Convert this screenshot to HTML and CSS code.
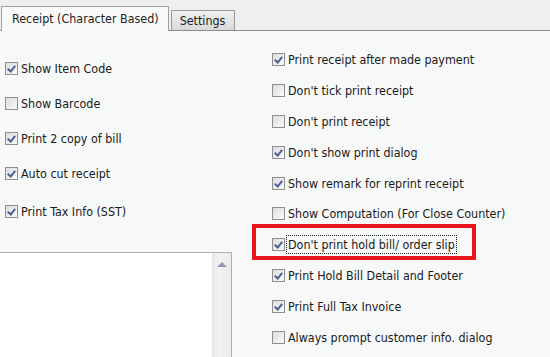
FILE: index.html
```html
<!DOCTYPE html>
<html>
<head>
    <meta charset="UTF-8">
    <title>Receipt Settings</title>
    <link rel="stylesheet" href="styles.css">
</head>
<body>
    <div id="tabBar">
        <div class="tab active">Receipt (Character Based)</div>
        <div class="tab">Settings</div>
    </div>

    <div id="tabPage">
        <div class="column leftColumn">
            <div class="options">
                <div class="option"><span class="box checked"></span><span class="label">Show Item Code</span></div>
                <div class="option"><span class="box"></span><span class="label">Show Barcode</span></div>
                <div class="option"><span class="box checked"></span><span class="label">Print 2 copy of bill</span></div>
                <div class="option"><span class="box checked"></span><span class="label">Auto cut receipt</span></div>
                <div class="option last"><span class="box checked"></span><span class="label">Print Tax Info (SST)</span></div>
            </div>
            <div class="textBox">
                <div class="scrollBar"><span class="arrowUp"></span></div>
            </div>
        </div>

        <div class="column rightColumn">
            <div class="option"><span class="box checked"></span><span class="label">Print receipt after made payment</span></div>
            <div class="option"><span class="box"></span><span class="label">Don't tick print receipt</span></div>
            <div class="option"><span class="box"></span><span class="label">Don't print receipt</span></div>
            <div class="option"><span class="box checked"></span><span class="label">Don't show print dialog</span></div>
            <div class="option"><span class="box checked"></span><span class="label">Show remark for reprint receipt</span></div>
            <div class="option"><span class="box"></span><span class="label">Show Computation (For Close Counter)</span></div>
            <div class="option highlight"><span class="box checked"></span><span class="label focused">Don't print hold bill/ order slip</span></div>
            <div class="option"><span class="box checked"></span><span class="label">Print Hold Bill Detail and Footer</span></div>
            <div class="option"><span class="box checked"></span><span class="label">Print Full Tax Invoice</span></div>
            <div class="option"><span class="box"></span><span class="label">Always prompt customer info. dialog</span></div>
        </div>
    </div>
</body>
</html>
```

FILE: styles.css
```css
body {
    margin: 0;
    width: 550px;
    height: 357px;
    overflow: hidden;
    background-color: #f7f8f8;
    font-family: Tahoma, "DejaVu Sans Condensed", "DejaVu Sans", sans-serif;
    font-size: 12.4px;
    color: #1a1a1a;
}

#tabBar {
    display: flex;
    align-items: flex-end;
    height: 30px;
    padding-left: 1px;
    background-color: #eeeff1;
    border-bottom: 1px solid #8c8c8c;
}

.tab {
    display: flex;
    align-items: center;
    height: 19px;
    padding: 0 9px 0 8px;
    margin-left: 2px;
    border: 1px solid #9a9a9a;
    border-bottom: none;
    background: linear-gradient(#f0f0f0, #d9d9d9);
    color: #222;
}

.tab.active {
    height: 23px;
    margin-left: 0;
    margin-bottom: -1px;
    padding: 0 9px 1px 10px;
    background: #f9f9f9;
    border-color: #a0a0a0;
}

#tabPage {
    display: grid;
    grid-template-columns: 252px 1fr;
    height: 326px;
}

.leftColumn {
    display: flex;
    flex-direction: column;
}

.options {
    padding-top: 20px;
}

.option {
    display: flex;
    align-items: center;
    height: 35px;
    padding-left: 5px;
}

.option.last {
    margin-top: 3px;
}

.rightColumn {
    padding-top: 13px;
}

.rightColumn .option {
    height: 30.9px;
    padding-left: 20px;
    position: relative;
}

.box {
    width: 11px;
    height: 11px;
    border: 1px solid #8f8f8f;
    background: linear-gradient(135deg, #dcdcdc, #fbfbfb);
    margin-right: 3px;
    flex-shrink: 0;
    position: relative;
}

.box.checked::after {
    content: "";
    position: absolute;
    left: 3px;
    top: 1px;
    width: 3px;
    height: 6px;
    border: solid #4b5f99;
    border-width: 0 2px 2px 0;
    transform: rotate(40deg);
}

.label {
    white-space: nowrap;
}

.label.focused {
    outline: 1px dotted #222;
    outline-offset: 1px;
}

.highlight::before {
    content: "";
    position: absolute;
    left: 0;
    top: -5px;
    width: 216px;
    height: 28px;
    border: 4px solid #e8161d;
}

.textBox {
    margin-top: 23px;
    width: 231px;
    flex: 1;
    display: flex;
    justify-content: flex-end;
    background: #ffffff;
    border-top: 1px solid #a9b0ba;
    border-right: 1px solid #a9b0ba;
}

.scrollBar {
    width: 19px;
    background: linear-gradient(90deg, #e8e8e8, #f2f2f2 40%, #ebebeb);
    display: flex;
    justify-content: center;
    padding-top: 9px;
}

.arrowUp {
    width: 0;
    height: 0;
    border-left: 5px solid transparent;
    border-right: 5px solid transparent;
    border-bottom: 5px solid #8e9ac0;
}
```
